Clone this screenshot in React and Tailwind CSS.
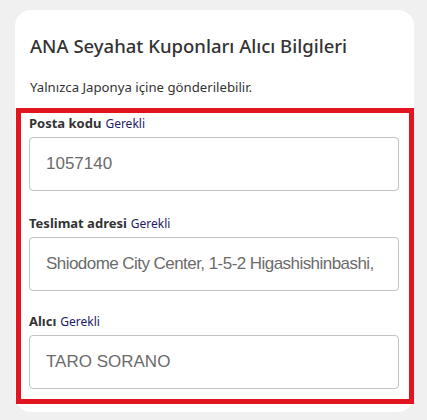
import React from 'react';

const fields = [
  { label: 'Posta kodu', value: '1057140', gap: '' },
  { label: 'Teslimat adresi', value: 'Shiodome City Center, 1-5-2 Higashishinbashi,', gap: 'mt-[24px]', tight: true },
  { label: 'Alıcı', value: 'TARO SORANO', gap: 'mt-[22px]' },
];

function Field({ label, value, gap, tight }) {
  return (
    <div className={gap}>
      <div className="flex items-baseline gap-[4px] h-[16px] leading-[16px]">
        <span className="text-[13px] font-bold text-[#333]">{label}</span>
        <span className="text-[12px] text-[#1c2064]">Gerekli</span>
      </div>
      <div className="mt-[6px] h-[54px] rounded-[4px] border border-[#c2c2c2] bg-white flex items-center pl-[16px] pr-[6px] overflow-hidden">
        <span className={`whitespace-nowrap text-[17px] text-[#6b6b6b] font-['Liberation_Sans',Arial,sans-serif] ${tight ? 'tracking-[-0.55px]' : ''}`}>{value}</span>
      </div>
    </div>
  );
}

export default function App() {
  return (
    <div className="h-[420px] bg-[#f0f0f0] pt-[10px] pl-[15px] font-['Noto_Sans',sans-serif]">
      <div className="w-[399px] bg-white rounded-[16px] pb-[8px]">
        <div className="px-[15px] pt-[23px] pb-[12px]">
          <h2 className="text-[18.5px] font-medium leading-[26px] text-[#333]">ANA Seyahat Kuponları Alıcı Bilgileri</h2>
          <p className="mt-[19px] text-[13.2px] leading-[18px] text-[#333]">Yalnızca Japonya içine gönderilebilir.</p>
        </div>
        <div className="ml-[1px] border-[5px] border-[#e2141f] pl-[8px] pr-[10px] pt-[2px] pb-[10px]">
          {fields.map((f) => (
            <Field key={f.label} {...f} />
          ))}
        </div>
      </div>
    </div>
  );
}
